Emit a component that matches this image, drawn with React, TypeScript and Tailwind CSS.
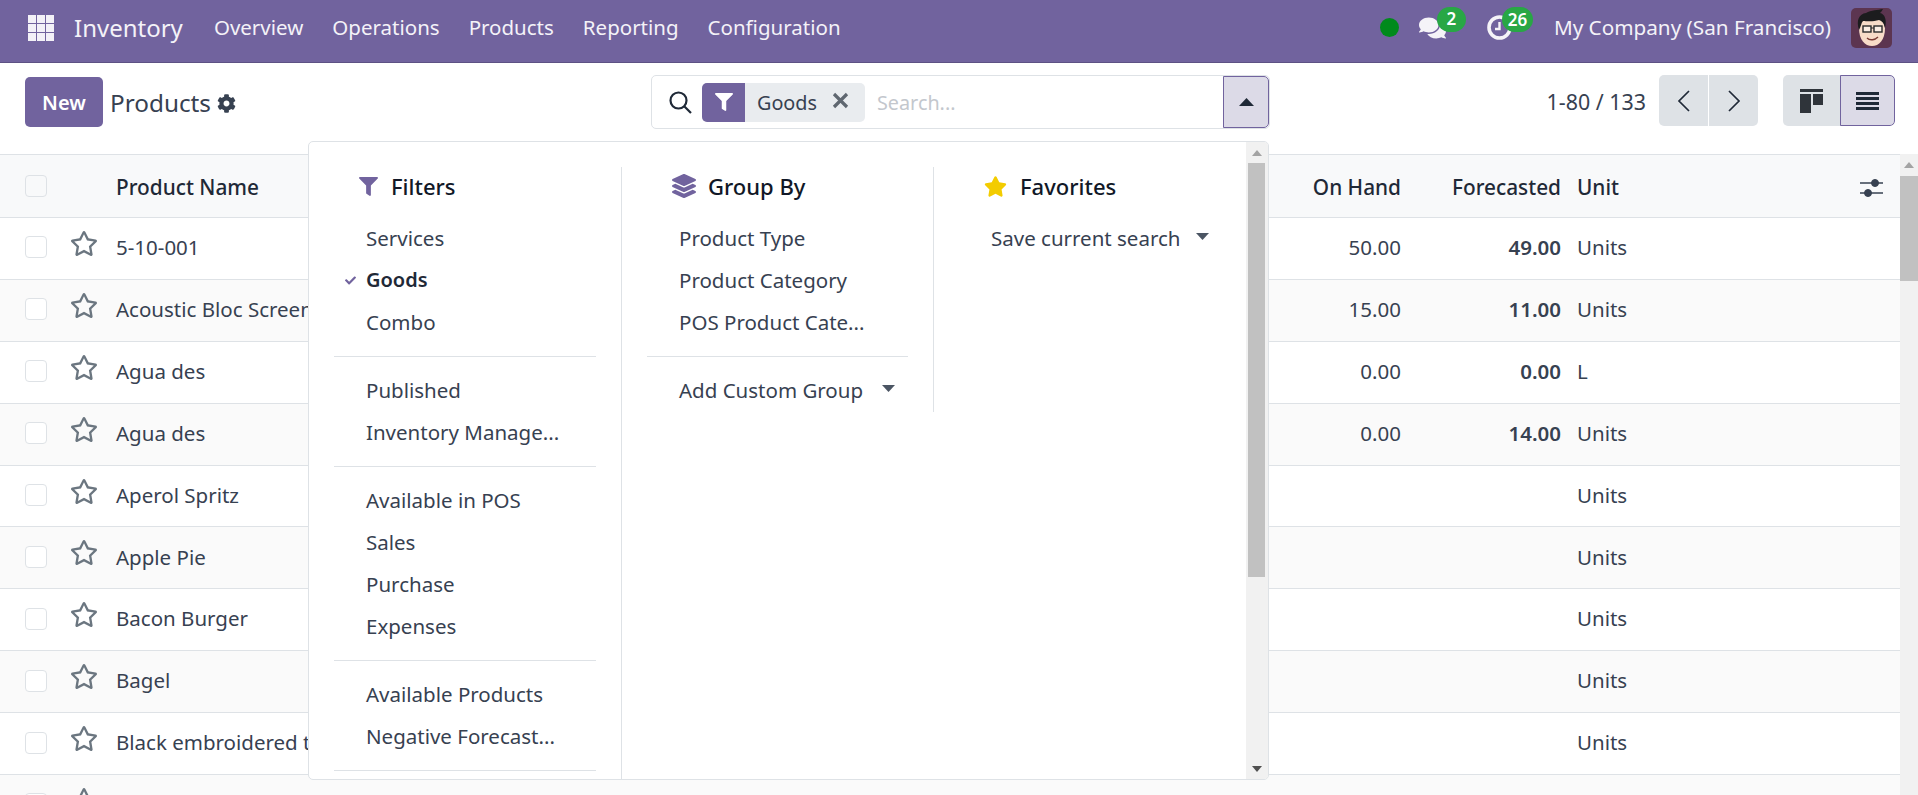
import React from "react";
import { FaFilter, FaLayerGroup, FaStar, FaRegStar, FaCog, FaComments, FaCheck } from "react-icons/fa";

const rows: [string, string, string, string][] = [
  ["5-10-001", "50.00", "49.00", "Units"],
  ["Acoustic Bloc Screens", "15.00", "11.00", "Units"],
  ["Agua des", "0.00", "0.00", "L"],
  ["Agua des", "0.00", "14.00", "Units"],
  ["Aperol Spritz", "", "", "Units"],
  ["Apple Pie", "", "", "Units"],
  ["Bacon Burger", "", "", "Units"],
  ["Bagel", "", "", "Units"],
  ["Black embroidered t-shirt", "", "", "Units"],
  ["", "", "", ""],
];

function Grid() {
  return (
    <svg viewBox="0 0 26 26" className="w-[26px] h-[26px]" fill="#f3f1f7">
      {[0, 9, 18].map((y) =>
        [0, 9, 18].map((x) => <rect key={`${x}-${y}`} x={x} y={y} width="8" height="8" />)
      )}
    </svg>
  );
}

function Avatar() {
  return (
    <svg viewBox="0 0 41 40" className="w-[41px] h-[40px] rounded-[5px]">
      <rect width="41" height="40" fill="#5c3550" />
      <path d="M8 20 C8 32 14 38 21 38 C28 38 34 32 34 20 L31 10 L11 10 Z" fill="#f8dcc8" />
      <path d="M8 22 C5 12 8 6 15 5 C20 2 27 2 32 1 C31 3 30 4 29 5 C34 6 36 12 34 20 C33 15 31 13 28 12 C22 14 15 13 12 13 C10 15 10 19 8 22 Z" fill="#1c1c1e" />
      <rect x="12" y="18" width="8" height="6" fill="#fbeee4" stroke="#2a2a2a" strokeWidth="1.4" />
      <rect x="23" y="18" width="8" height="6" fill="#fbeee4" stroke="#2a2a2a" strokeWidth="1.4" />
      <path d="M20 20 H23" stroke="#2a2a2a" strokeWidth="1.2" />
      <path d="M16 30 C19 33 24 32 27 29" stroke="#7a3b34" strokeWidth="1.4" fill="none" />
    </svg>
  );
}

function Caret({ className }: { className: string }) {
  return (
    <svg viewBox="0 0 13 7" className={`w-[13px] h-[7px] ${className}`} fill="#4b5563">
      <path d="M0 0 H13 L6.5 7 Z" />
    </svg>
  );
}

function Item({ label, checked, caret }: { label: string; checked?: boolean; caret?: string }) {
  return (
    <div className="relative h-[42px] flex items-center pl-[32px] pb-[2px] text-[#374151] text-[20.5px] whitespace-nowrap">
      {checked && <FaCheck className="absolute left-[11px] top-[15px] w-[11px] h-[11px] text-[#71639e]" />}
      <span className={checked ? "font-semibold text-[20px] text-[#1f2937]" : ""}>{label}</span>
      {caret && <Caret className={caret} />}
    </div>
  );
}

function Sep() {
  return <div className="h-px bg-[#dee2e6] mt-[12px] mb-[13px]" />;
}

function Head({ icon, label, gap }: { icon: React.ReactNode; label: string; gap: string }) {
  return (
    <div className="h-[40px] mb-[11px] pb-[2px] flex items-center pl-[25px]">
      <div className={gap}>{icon}</div>
      <span className="text-[22px] font-medium text-[#111827]">{label}</span>
    </div>
  );
}

function Arrow({ up }: { up?: boolean }) {
  return (
    <svg viewBox="0 0 12 8" className="w-[12px] h-[8px]" fill={up ? "#a3a3a3" : "#505050"}>
      <path d={up ? "M6 1 L11 7 H1 Z" : "M6 7 L11 1 H1 Z"} />
    </svg>
  );
}

function Dropdown() {
  return (
    <div className="absolute left-[308px] top-[141px] w-[961px] h-[639px] bg-white border border-[#dee2e6] rounded-[5px] overflow-hidden flex">
      <div className="flex-1 overflow-hidden flex items-start pt-[25px]">
        <div className="w-[313px] shrink-0 px-[25px] border-r border-[#dee2e6]">
          <Head icon={<FaFilter className="w-[19px] h-[19px] text-[#71639e]" />} label="Filters" gap="w-[32px]" />
          <Item label="Services" />
          <Item label="Goods" checked />
          <Item label="Combo" />
          <Sep />
          <Item label="Published" />
          <Item label="Inventory Manage..." />
          <Sep />
          <Item label="Available in POS" />
          <Item label="Sales" />
          <Item label="Purchase" />
          <Item label="Expenses" />
          <Sep />
          <Item label="Available Products" />
          <Item label="Negative Forecast..." />
          <Sep />
          <div className="h-[14px]" />
        </div>
        <div className="w-[312px] shrink-0 px-[25px] border-r border-[#dee2e6]">
          <Head icon={<FaLayerGroup className="w-[24px] h-[24px] text-[#71639e]" />} label="Group By" gap="w-[36px]" />
          <Item label="Product Type" />
          <Item label="Product Category" />
          <Item label="POS Product Cate..." />
          <Sep />
          <Item label="Add Custom Group" caret="absolute right-[13px] top-[15px]" />
        </div>
        <div className="w-[312px] shrink-0 px-[25px]">
          <Head icon={<FaStar className="w-[23px] h-[23px] text-[#f3cc00]" />} label="Favorites" gap="w-[36px]" />
          <Item label="Save current search" caret="absolute right-[12px] top-[15px]" />
        </div>
      </div>
      <div className="w-[22px] shrink-0 bg-[#f1f1f1] flex flex-col items-center pr-[1px]">
        <div className="h-[21px] flex items-center"><Arrow up /></div>
        <div className="w-[17px] h-[414px] bg-[#c1c1c1]" />
        <div className="mt-auto h-[21px] flex items-center"><Arrow /></div>
      </div>
    </div>
  );
}

export default function App() {
  return (
    <div className="relative h-screen overflow-hidden bg-white text-[#374151] text-[20.5px] font-['Noto_Sans',sans-serif]">
      <nav className="h-[63px] bg-[#71639e] border-b border-[#5d5184] flex items-center text-[#f4f2f8] pl-[28px] pr-[26px] pb-[7px]">
        <Grid />
        <span className="ml-[20px] text-[24px]">Inventory</span>
        <div className="ml-[31px] flex gap-[29px] text-[20.5px]">
          <span>Overview</span>
          <span>Operations</span>
          <span>Products</span>
          <span>Reporting</span>
          <span>Configuration</span>
        </div>
        <div className="ml-auto flex items-center">
          <div className="w-[19px] h-[19px] rounded-full bg-[#008a1c]" />
          <div className="relative ml-[19px] w-[29px] h-[24px]">
            <FaComments className="w-[29px] h-[24px] text-[#f5f3f8]" />
            <span className="absolute left-[19px] -top-[9px] w-[29px] h-[25px] rounded-full bg-[#28a745] text-white text-[17px] font-semibold flex items-center justify-center">2</span>
          </div>
          <div className="relative ml-[40px] w-[25px] h-[25px]">
            <svg viewBox="0 0 25 25" className="w-[25px] h-[25px]" fill="none" stroke="#f5f3f8" strokeWidth="3.6">
              <circle cx="12.5" cy="12.5" r="10.5" />
              <path d="M12.5 7 V14 H8" strokeWidth="2.4" />
            </svg>
            <span className="absolute left-[15px] -top-[8px] w-[31px] h-[25px] rounded-full bg-[#28a745] text-white text-[17px] font-semibold flex items-center justify-center">26</span>
          </div>
          <span className="ml-[42px] text-[20.7px]">My Company (San Francisco)</span>
          <div className="ml-[20px] flex"><Avatar /></div>
        </div>
      </nav>

      <div className="h-[91px] flex items-start pt-[12px]">
        <div className="w-[651px] shrink-0 pl-[25px] flex items-center">
          <button className="w-[78px] h-[50px] mt-[2px] rounded-[5px] bg-[#71639e] text-white font-semibold text-[20px] pt-[1px]">New</button>
          <span className="ml-[7px] mt-[4px] text-[24.3px] text-[#374151]">Products</span>
          <FaCog className="ml-[6px] mt-[4px] w-[19px] h-[19px] text-[#374151]" />
        </div>
        <div className="w-[619px] shrink-0 h-[54px] border border-[#dee2e6] rounded-[5px] flex items-center overflow-hidden text-[19.8px]">
          <svg viewBox="0 0 24 24" className="ml-[16px] w-[24px] h-[24px]" fill="none" stroke="#1f2937" strokeWidth="2.2">
            <circle cx="10.5" cy="10.5" r="8" />
            <path d="M16.5 16.5 L23 23" />
          </svg>
          <div className="ml-[10px] h-[39px] w-[163px] rounded-[5px] overflow-hidden flex items-center bg-[#e9ecef]">
            <div className="w-[43px] h-full bg-[#71639e] flex items-center justify-center">
              <FaFilter className="w-[18px] h-[18px] text-white" />
            </div>
            <span className="ml-[12px] pt-[1px] text-[#374151]">Goods</span>
            <svg viewBox="0 0 17 17" className="ml-[15px] -mt-[4px] w-[17px] h-[17px]" fill="none" stroke="#5f6770" strokeWidth="3.2">
              <path d="M2 2 L15 15 M15 2 L2 15" />
            </svg>
          </div>
          <span className="ml-[12px] pt-[1px] text-[#c3c7cd]">Search...</span>
          <div className="ml-auto w-[46px] h-full bg-[#dcdae7] border border-[#71639e] rounded-r-[5px] flex items-center justify-center">
            <svg viewBox="0 0 15 8" className="w-[15px] h-[8px]" fill="#1f2937"><path d="M0 8 L7.5 0 L15 8 Z" /></svg>
          </div>
        </div>
        <div className="flex-1 flex justify-end items-start pr-[23px]">
          <span className="mt-[11px] mr-[13px] text-[21.4px] text-[#374151]">1-80 / 133</span>
          <div className="h-[51px] w-[99px] flex rounded-[5px] overflow-hidden bg-[#dee2e6]">
            <div className="flex-1 flex items-center justify-center border-r border-white">
              <svg viewBox="0 0 14 24" className="w-[14px] h-[24px]" fill="none" stroke="#1f2937" strokeWidth="1.7"><path d="M12 2 L2 12 L12 22" /></svg>
            </div>
            <div className="flex-1 flex items-center justify-center">
              <svg viewBox="0 0 14 24" className="w-[14px] h-[24px]" fill="none" stroke="#1f2937" strokeWidth="1.7"><path d="M2 2 L12 12 L2 22" /></svg>
            </div>
          </div>
          <div className="ml-[25px] h-[51px] w-[112px] flex rounded-[5px] overflow-hidden bg-[#dee2e6]">
            <div className="w-[57px] flex items-center justify-center">
              <svg viewBox="0 0 23 24" className="w-[23px] h-[24px]" fill="#2f343a">
                <rect x="0" y="0" width="23" height="3" />
                <rect x="0" y="5" width="11" height="19" />
                <rect x="13" y="5" width="10" height="11" />
              </svg>
            </div>
            <div className="flex-1 bg-[#dcdae7] border border-[#71639e] rounded-r-[5px] flex items-center justify-center">
              <svg viewBox="0 0 23 18" className="w-[23px] h-[18px]" fill="#1f2937">
                <rect y="0" width="23" height="3" />
                <rect y="5" width="23" height="3" />
                <rect y="10" width="23" height="3" />
                <rect y="15" width="23" height="3" />
              </svg>
            </div>
          </div>
        </div>
      </div>

      <div className="flex">
        <div className="flex-1 min-w-0">
          <div className="h-[64px] pt-[4px] bg-[#f8f9fa] border-y border-[#dee2e6] grid grid-cols-[70px_46px_1165px_120px_160px_1fr] items-center font-medium text-[20.8px] text-[#1f2937]">
            <div className="pl-[25px] -mt-[4px]"><div className="w-[22px] h-[22px] rounded-[4px] border border-[#dee2e6] bg-[#f8f9fa]" /></div>
            <div />
            <div>Product Name</div>
            <div className="text-right">On Hand</div>
            <div className="text-right">Forecasted</div>
            <div className="pl-[16px] flex items-center justify-between pr-[17px]">
              <span>Unit</span>
              <svg viewBox="0 0 23 20" className="w-[23px] h-[20px]" fill="#374151" stroke="#374151">
                <path d="M0 5 H23 M0 15 H23" strokeWidth="1.4" />
                <circle cx="15" cy="5" r="3.5" />
                <circle cx="8" cy="15" r="3.5" />
              </svg>
            </div>
          </div>
          {rows.map((r, i) => (
            <div key={i} className={`h-[61.9px] border-b border-[#dee2e6] grid grid-cols-[70px_46px_1165px_120px_160px_1fr] items-center pb-[2px] ${i % 2 === 1 ? "bg-[#fafafa]" : "bg-white"}`}>
              <div className="pl-[25px]"><div className="w-[22px] h-[22px] rounded-[4px] border border-[#dee2e6] bg-white" /></div>
              <div><FaRegStar className="w-[28px] h-[27px] -mt-[8px] text-[#6b7680]" /></div>
              <div className="whitespace-nowrap">{r[0]}</div>
              <div className="text-right">{r[1]}</div>
              <div className="text-right font-semibold">{r[2]}</div>
              <div className="pl-[16px]">{r[3]}</div>
            </div>
          ))}
        </div>
        <div className="w-[18px] shrink-0 bg-[#f1f1f1] h-[641px] flex flex-col items-center">
          <div className="h-[22px] flex items-center"><Arrow up /></div>
          <div className="w-[18px] h-[105px] bg-[#c1c1c1]" />
        </div>
      </div>

      <Dropdown />
    </div>
  );
}
